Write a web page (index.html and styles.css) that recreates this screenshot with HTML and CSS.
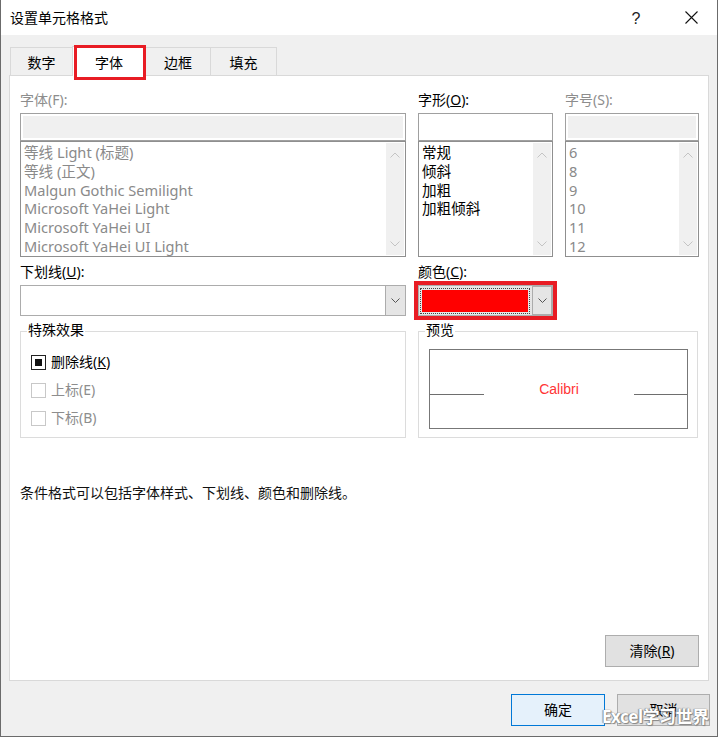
FILE: index.html
```html
<!DOCTYPE html>
<html lang="zh-CN">
<head>
<meta charset="utf-8">
<title>设置单元格格式</title>
<link rel="stylesheet" href="styles.css">
</head>
<body>
<div class="window">
  <div class="titlebar">
    <span class="title">设置单元格格式</span>
    <span class="help">?</span>
    <span class="close"><svg width="13" height="13" viewBox="0 0 13 13"><path d="M0.5 0.5 L12.5 12.5 M12.5 0.5 L0.5 12.5" stroke="#111" stroke-width="1.1" fill="none"/></svg></span>
  </div>
  <div class="client">
    <div class="tabs">
      <div class="tab t1">数字</div>
      <div class="tab t2 active">字体</div>
      <div class="tab t3">边框</div>
      <div class="tab t4">填充</div>
    </div>
    <div class="panel">
      <div class="row3">
        <div class="field">
          <div class="label dis">字体(F):</div>
          <div class="edit dis"></div>
          <div class="list">
            <div class="items dis">
              <div>等线 Light (标题)</div>
              <div>等线 (正文)</div>
              <div>Malgun Gothic Semilight</div>
              <div>Microsoft YaHei Light</div>
              <div>Microsoft YaHei UI</div>
              <div>Microsoft YaHei UI Light</div>
            </div>
            <div class="sb">
              <svg width="10" height="6" viewBox="0 0 10 6"><polyline points="0.5,5.5 5,1 9.5,5.5" fill="none" stroke="#c4c4c4" stroke-width="1"/></svg>
              <svg width="10" height="6" viewBox="0 0 10 6"><polyline points="0.5,0.5 5,5 9.5,0.5" fill="none" stroke="#c4c4c4" stroke-width="1"/></svg>
            </div>
          </div>
        </div>
        <div class="field">
          <div class="label">字形(<u>O</u>):</div>
          <div class="edit"></div>
          <div class="list">
            <div class="items">
              <div>常规</div>
              <div>倾斜</div>
              <div>加粗</div>
              <div>加粗倾斜</div>
            </div>
            <div class="sb">
              <svg width="10" height="6" viewBox="0 0 10 6"><polyline points="0.5,5.5 5,1 9.5,5.5" fill="none" stroke="#c4c4c4" stroke-width="1"/></svg>
              <svg width="10" height="6" viewBox="0 0 10 6"><polyline points="0.5,0.5 5,5 9.5,0.5" fill="none" stroke="#c4c4c4" stroke-width="1"/></svg>
            </div>
          </div>
        </div>
        <div class="field">
          <div class="label dis">字号(S):</div>
          <div class="edit dis"></div>
          <div class="list">
            <div class="items dis">
              <div>6</div>
              <div>8</div>
              <div>9</div>
              <div>10</div>
              <div>11</div>
              <div>12</div>
            </div>
            <div class="sb">
              <svg width="10" height="6" viewBox="0 0 10 6"><polyline points="0.5,5.5 5,1 9.5,5.5" fill="none" stroke="#c4c4c4" stroke-width="1"/></svg>
              <svg width="10" height="6" viewBox="0 0 10 6"><polyline points="0.5,0.5 5,5 9.5,0.5" fill="none" stroke="#c4c4c4" stroke-width="1"/></svg>
            </div>
          </div>
        </div>
      </div>

      <div class="row2">
        <div class="field">
          <div class="label">下划线(<u>U</u>):</div>
          <div class="combo">
            <div class="combo-value"></div>
            <div class="drop"><svg width="9" height="5" viewBox="0 0 9 5"><polyline points="0.5,0.5 4.5,4.5 8.5,0.5" fill="none" stroke="#555" stroke-width="1"/></svg></div>
          </div>
        </div>
        <div class="field">
          <div class="label">颜色(<u>C</u>):</div>
          <div class="combo color">
            <div class="focus"><div class="swatch"></div></div>
            <div class="drop"><svg width="9" height="5" viewBox="0 0 9 5"><polyline points="0.5,0.5 4.5,4.5 8.5,0.5" fill="none" stroke="#555" stroke-width="1"/></svg></div>
          </div>
        </div>
      </div>

      <div class="groups">
        <div class="group">
          <div class="group-title">特殊效果</div>
          <div class="checks">
            <div class="check"><span class="box mixed"><span></span></span><span>删除线(<u>K</u>)</span></div>
            <div class="check dis"><span class="box"></span><span>上标(E)</span></div>
            <div class="check dis"><span class="box"></span><span>下标(B)</span></div>
          </div>
        </div>
        <div class="group">
          <div class="group-title">预览</div>
          <div class="preview">
            <div class="pv-line"></div>
            <div class="pv-text">Calibri</div>
            <div class="pv-line"></div>
          </div>
        </div>
      </div>

      <p class="note">条件格式可以包括字体样式、下划线、颜色和删除线。</p>

      <div class="panel-actions">
        <button class="btn clear">清除(<u>R</u>)</button>
      </div>
    </div>
    <div class="footer">
      <button class="btn primary">确定</button>
      <button class="btn cancel">取消</button>
      <span class="watermark">Excel学习世界</span>
    </div>
  </div>
</div>
</body>
</html>
```

FILE: styles.css
```css
* { box-sizing: border-box; }

html, body {
  margin: 0;
  padding: 0;
  background: #ffffff;
}

body {
  width: 719px;
  height: 737px;
  overflow: hidden;
  font-family: "Noto Sans", "Noto Sans CJK SC", sans-serif;
  font-size: 14px;
  color: #000;
}

.window {
  width: 718px;
  height: 737px;
  border: 1px solid #6b6b6b;
  border-top: none;
  background: #f0f0f0;
  display: flex;
  flex-direction: column;
}

/* title bar */
.titlebar {
  height: 35px;
  background: #fff;
  display: flex;
  align-items: center;
  padding-left: 9px;
  padding-right: 3px;
  flex-shrink: 0;
}
.title {
  font-size: 14px;
  line-height: 18px;
}
.help {
  margin-left: auto;
  width: 20px;
  text-align: center;
  font-family: "Liberation Sans", sans-serif;
  font-size: 16px;
  line-height: 18px;
  margin-top: 2px;
  margin-right: 22px;
  color: #222;
}
.close {
  width: 46px;
  display: flex;
  justify-content: center;
  align-items: center;
}

/* client area */
.client {
  flex: 1;
  padding: 12px 8px 0 8px;
  display: flex;
  flex-direction: column;
}

.tabs {
  display: flex;
  align-items: flex-end;
  height: 28px;
  padding-left: 1px;
}
.tab {
  height: 28px;
  border: 1px solid #d9d9d9;
  border-bottom: none;
  background: #f0f0f0;
  display: flex;
  align-items: center;
  justify-content: center;
  margin-right: -1px;
  font-size: 14px;
  line-height: 18px;
  padding-top: 2px;
}
.t1 { width: 63px; }
.t2 { width: 74px; }
.t3 { width: 66px; }
.t4 { width: 67px; }
.tab.active {
  height: 30px;
  margin-bottom: -1px;
  background: #fff;
  position: relative;
  z-index: 2;
}
.tab.active::after {
  content: "";
  position: absolute;
  top: -2px;
  left: 1px;
  right: -1px;
  bottom: -4px;
  border: 3px solid #e81c24;
}

/* panel */
.panel {
  height: 606px;
  border: 1px solid #d9d9d9;
  background: #fff;
  padding: 15px 9px 13px 10px;
  display: flex;
  flex-direction: column;
  position: relative;
  z-index: 1;
}

.row3 {
  display: grid;
  grid-template-columns: 386px 135px 134px;
  column-gap: 12px;
}
.row2 {
  display: grid;
  grid-template-columns: 386px 135px;
  column-gap: 12px;
  margin-top: 6px;
}

.label {
  height: 18px;
  line-height: 18px;
  font-size: 14px;
  margin-bottom: 4px;
  white-space: nowrap;
}
.label.dis { color: #8d8d8d; }

.edit {
  height: 28px;
  border: 1px solid #a0a0a0;
  background: #fff;
}
.edit.dis {
  padding: 2px;
  background: #f0f0f0;
  background-clip: content-box;
}

.list {
  height: 116px;
  border: 1px solid #8f8f8f;
  background: #fff;
  display: flex;
}
.items {
  flex: 1;
  padding: 1px 0 0 3px;
  font-size: 14.6px;
  line-height: 18.8px;
  white-space: nowrap;
  overflow: hidden;
}
.items.dis { color: #8a8a8a; }
.sb {
  width: 18px;
  margin: 1px 1px 1px 0;
  background: #f0f0f0;
  display: flex;
  flex-direction: column;
  justify-content: space-between;
  align-items: center;
  padding: 9px 0 8px;
}
.sb svg { display: block; }

/* combos */
.combo {
  height: 31px;
  border: 1px solid #acacac;
  background: #fff;
  display: flex;
}
.combo-value { flex: 1; }
.drop {
  width: 20px;
  border-left: 1px solid #acacac;
  background: #e5e5e5;
  display: flex;
  align-items: center;
  justify-content: center;
}
.drop svg { display: block; }

.combo.color {
  position: relative;
  background: #e5e5e5;
  padding: 1px 2px 1px 1px;
}
.combo.color .drop {
  border: 1px solid #acacac;
  margin: -1px -2px -1px 0;
}
.combo.color::after {
  content: "";
  position: absolute;
  top: -5px;
  left: -5px;
  right: -5px;
  bottom: -5px;
  border: 4px solid #e81c24;
}
.focus {
  flex: 1;
  margin: 1px 2px 0 0;
  border: 1px dotted #444;
  padding: 1px;
}
.swatch {
  height: 100%;
  background: #ff0000;
}

/* groups */
.groups {
  display: grid;
  grid-template-columns: 386px 280px;
  column-gap: 12px;
  margin-top: 15px;
}
.group {
  height: 107px;
  border: 1px solid #dcdcdc;
}
.group-title {
  width: fit-content;
  margin: -11px 0 0 6px;
  padding: 0 1px;
  background: #fff;
  line-height: 18px;
  font-size: 14px;
}
.checks {
  padding-top: 9px;
}
.check {
  height: 28px;
  display: flex;
  align-items: center;
  padding-left: 10px;
  line-height: 18px;
}
.check.dis { color: #8d8d8d; }
.box {
  width: 15px;
  height: 15px;
  border: 1px solid #c8c8c8;
  background: #fff;
  margin-right: 5px;
  padding: 3px;
}
.box.mixed { border-color: #222; }
.box.mixed span {
  display: block;
  width: 7px;
  height: 7px;
  background: #111;
}

.preview {
  margin: 10px 9px 0 10px;
  height: 80px;
  border: 1px solid #777;
  display: grid;
  grid-template-columns: 54px 1fr 53px;
  align-items: start;
}
.pv-line {
  height: 45px;
  border-bottom: 1px solid #6e6e6e;
}
.pv-text {
  padding-top: 30px;
  text-align: center;
  color: #ff3535;
  font-family: "Liberation Sans", "Noto Sans", sans-serif;
  font-size: 14px;
  line-height: 18px;
}

.note {
  margin: 46px 0 0 0;
  font-size: 14px;
  line-height: 18px;
  color: #111;
}

.panel-actions {
  margin-top: auto;
  display: flex;
  justify-content: flex-end;
}

.btn {
  font-family: inherit;
  font-size: 14px;
  line-height: 18px;
  height: 32px;
  border: 1px solid #adadad;
  background: #e1e1e1;
  color: #000;
  padding: 0;
  margin: 0;
}
.clear { width: 94px; }

.footer {
  position: relative;
  display: flex;
  justify-content: flex-end;
  gap: 12px;
  margin-top: 13px;
  margin-right: -1px;
}
.primary {
  width: 94px;
  background: #e5f1fb;
  border-color: #0078d7;
}
.cancel { width: 93px; }

.watermark {
  position: absolute;
  left: 593px;
  top: 13px;
  font-family: "Noto Sans", "Noto Sans CJK SC", sans-serif;
  font-size: 17px;
  font-weight: bold;
  line-height: 20px;
  letter-spacing: -0.5px;
  color: #ffffff;
  text-shadow: 0 0 1px #666, 1px 1px 1px #888, -1px 0 1px #999;
  white-space: nowrap;
}
```
